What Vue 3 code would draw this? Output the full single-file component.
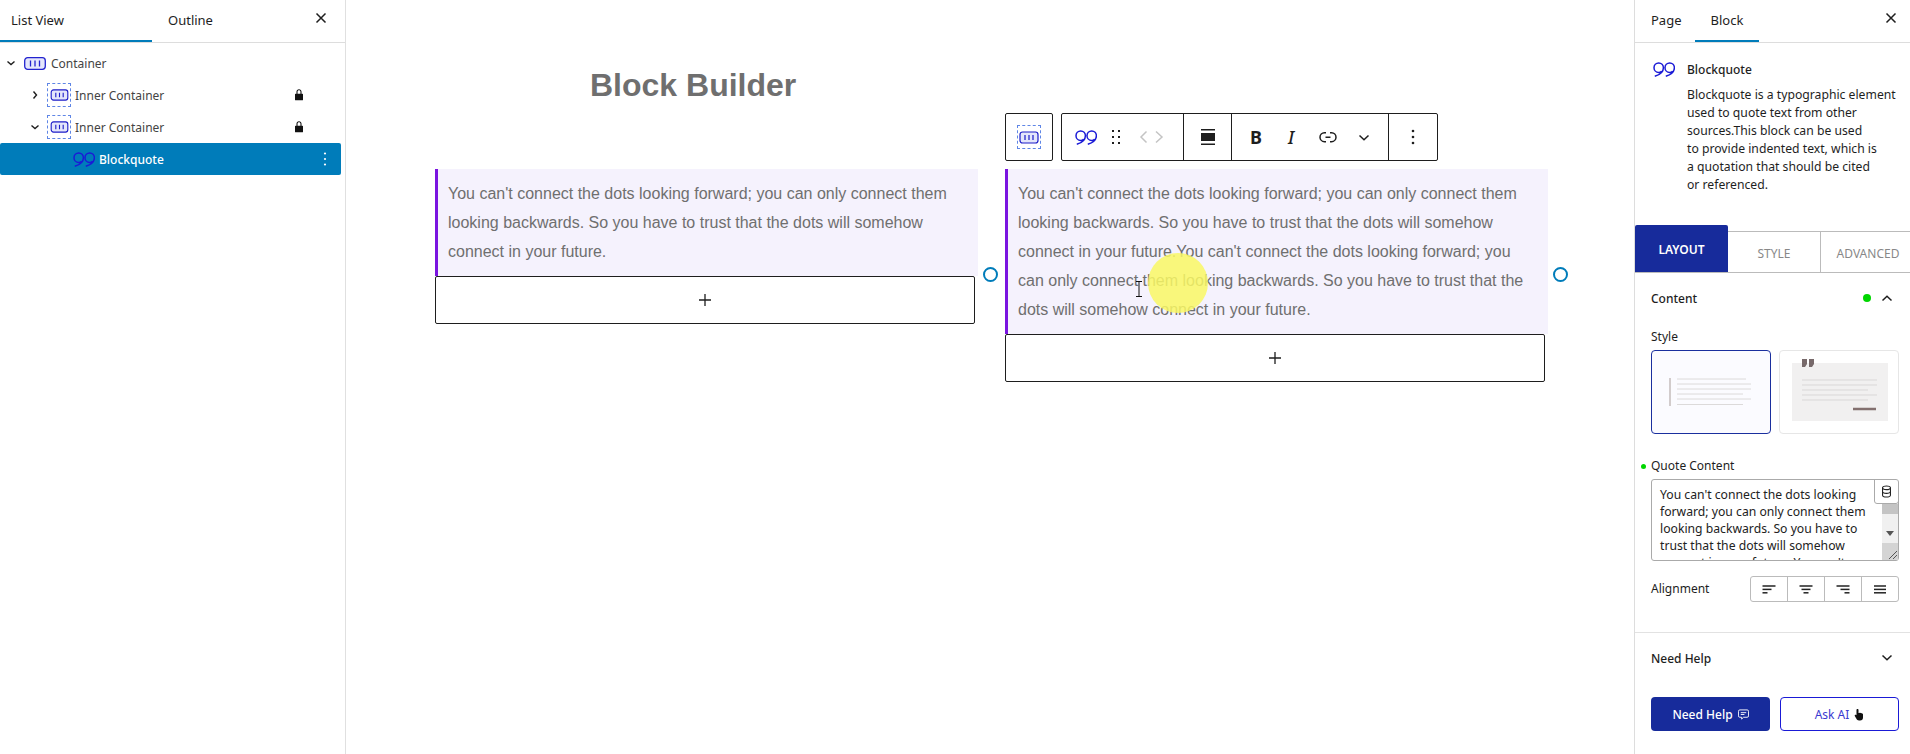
<script setup>
const rows = [
  { label: 'Container', cls: 'lvl0', chev: 'down', icon: 'outer' },
  { label: 'Inner Container', cls: 'lvl1', chev: 'right', icon: 'inner', lock: true },
  { label: 'Inner Container', cls: 'lvl1', chev: 'down', icon: 'inner', lock: true },
]
const quote = "You can't connect the dots looking forward; you can only connect them looking backwards. So you have to trust that the dots will somehow connect in your future."
const alignments = [
  ['M3.500 5h13', 'M3.500 8.400h9', 'M3.500 11.800h5'],
  ['M3.500 5h13', 'M5.500 8.400h9', 'M7.500 11.800h5'],
  ['M3.500 5h13', 'M7.500 8.400h9', 'M11.500 11.800h5'],
  ['M4 5h12', 'M4 8.400h12', 'M4 11.800h12'],
]
const quoteMark = 'M1.800 14.200C6.800 12.800 10.400 9.800 10.400 5.700A4.700 4.700 0 1 0 5.700 10.400C6.900 10.400 7.900 10 8.500 9.300M12.800 14.200C17.800 12.800 21.400 9.800 21.400 5.700A4.700 4.700 0 1 0 16.700 10.400C17.900 10.400 18.900 10 19.500 9.300'
</script>

<template>
  <div class="page">
    <aside class="left">
      <div class="tabs">
        <div class="tab active first">List View</div>
        <div class="tab second">Outline</div>
        <svg class="close" viewBox="0 0 12 12" width="12" height="12"><path d="M1.500 1.500l9 9M10.500 1.500l-9 9" stroke="#1e1e1e" stroke-width="1.500" fill="none" /></svg>
      </div>
      <div class="tree">
        <div v-for="(r, i) in rows" :key="i" class="row" :class="r.cls">
          <svg class="chev" viewBox="0 0 10 10" width="10" height="10">
            <path v-if="r.chev === 'down'" d="M1.500 3.500L5 6.500l3.500-3" fill="none" stroke="#1e1e1e" stroke-width="1.400" />
            <path v-else d="M3.500 1.500L6.500 5l-3 3.500" fill="none" stroke="#1e1e1e" stroke-width="1.400" />
          </svg>
          <span v-if="r.icon === 'inner'" class="dashed">
            <svg viewBox="0 0 20 13" width="19" height="12"><rect x="1" y="1" width="18" height="11" rx="2.500" fill="#e4e6fb" stroke="#1c1cc8" stroke-width="1.200" /><path d="M6 4v5M10 4v5M14 4v5" stroke="#1c1cc8" stroke-width="1.200" /></svg>
          </span>
          <svg v-else class="outer" viewBox="0 0 22 13" width="22" height="13"><rect x="0.700" y="0.700" width="20.600" height="11.600" rx="3" fill="#e4e6fb" stroke="#2323cf" stroke-width="1.300" /><path d="M6.500 3.500v6M11 3.500v6M15.500 3.500v6" stroke="#2323cf" stroke-width="1.300" /></svg>
          <span class="label">{{ r.label }}</span>
          <svg v-if="r.lock" class="lock" viewBox="0 0 24 24" width="16" height="16"><path d="M17 10h-1.200V7c0-2.100-1.700-3.800-3.800-3.800-2.100 0-3.800 1.700-3.800 3.800v3H7c-.6 0-1 .4-1 1v8c0 .6.4 1 1 1h10c.6 0 1-.4 1-1v-8c0-.6-.4-1-1-1zM9.800 7c0-1.200 1-2.200 2.200-2.200s2.200 1 2.200 2.200v3H9.800V7z" fill="#111" /></svg>
        </div>
        <div class="row selected">
          <svg class="q" viewBox="0 0 22 15" width="22" height="15"><path class="qb" :d="quoteMark" /></svg>
          <span class="label sel">Blockquote</span>
          <svg class="kebab" viewBox="0 0 4 16" width="4" height="16"><circle cx="2" cy="2.500" r="1.100" fill="#fff" /><circle cx="2" cy="8" r="1.100" fill="#fff" /><circle cx="2" cy="13.500" r="1.100" fill="#fff" /></svg>
        </div>
      </div>
    </aside>

    <main class="canvas">
      <h1 class="title">Block Builder</h1>
      <div class="cols">
        <section class="col">
          <blockquote class="bq">{{ quote }}</blockquote>
          <div class="adder"><svg viewBox="0 0 12 12" width="12" height="12"><path d="M6 0v12M0 6h12" stroke="#1e1e1e" stroke-width="1.300" /></svg></div>
        </section>
        <section class="col">
          <div class="toolbar">
            <div class="tb switcher">
              <span class="dashed big">
                <svg viewBox="0 0 20 13" width="20" height="13"><rect x="1" y="1" width="18" height="11" rx="2.500" fill="#e4e6fb" stroke="#1c1cc8" stroke-width="1.200" /><path d="M6 4v5M10 4v5M14 4v5" stroke="#1c1cc8" stroke-width="1.200" /></svg>
              </span>
            </div>
            <div class="tb main-tb">
              <div class="grp g1">
                <svg viewBox="0 0 22 15" width="22" height="15"><path class="qb" :d="quoteMark" /></svg>
                <svg class="drag" viewBox="0 0 24 24" width="24" height="24"><path d="M8 7h2V5H8v2zm0 6h2v-2H8v2zm0 6h2v-2H8v2zm6-14v2h2V5h-2zm0 8h2v-2h-2v2zm0 6h2v-2h-2v2z" fill="#1e1e1e" /></svg>
                <svg class="mover" viewBox="0 0 26 14" width="26" height="14"><path d="M7.500 1.500L2 7 7.500 12.500M17 1.500L23 7 17 12.500" fill="none" stroke="#c4c4c4" stroke-width="1.500" /></svg>
              </div>
              <div class="grp g2">
                <svg viewBox="0 0 24 24" width="24" height="24"><path d="M5 4h14v1.500H5V4zM5 8h14v8H5V8zM5 18.500h14V20H5v-1.500z" fill="#1e1e1e" /></svg>
              </div>
              <div class="grp g3">
                <span class="fmt b">B</span>
                <span class="fmt i">I</span>
                <svg class="link" viewBox="0 0 24 24" width="24" height="24"><path d="M10 17.389H8.444A5.194 5.194 0 1 1 8.444 7H10v1.500H8.444a3.694 3.694 0 0 0 0 7.389H10v1.500ZM14 7h1.556a5.194 5.194 0 0 1 0 10.390H14v-1.500h1.556a3.694 3.694 0 0 0 0-7.390H14V7Zm-4.500 6h5v-1.500h-5V13Z" fill="#1e1e1e" /></svg>
                <svg class="more" viewBox="0 0 12 8" width="12" height="8"><path d="M1.500 1.500L6 5.800l4.500-4.300" fill="none" stroke="#1e1e1e" stroke-width="1.500" /></svg>
              </div>
              <div class="grp g4">
                <svg viewBox="0 0 4 16" width="4" height="16"><circle cx="2" cy="2" r="1.300" fill="#1e1e1e" /><circle cx="2" cy="8" r="1.300" fill="#1e1e1e" /><circle cx="2" cy="14" r="1.300" fill="#1e1e1e" /></svg>
              </div>
            </div>
          </div>
          <blockquote class="bq">{{ quote }}{{ quote }}</blockquote>
          <div class="adder"><svg viewBox="0 0 12 12" width="12" height="12"><path d="M6 0v12M0 6h12" stroke="#1e1e1e" stroke-width="1.300" /></svg></div>
          <span class="handle hl"></span>
          <span class="handle hr"></span>
          <span class="spot"></span>
          <svg class="ibeam" viewBox="0 0 8 16" width="8" height="16"><path d="M1 .5h6M1 15.500h6M4 .5v15" stroke="#111" stroke-width="1" fill="none" /></svg>
        </section>
      </div>
    </main>

    <aside class="right">
      <div class="tabs rtabs">
        <div class="rtab">Page</div>
        <div class="rtab ractive">Block</div>
        <svg class="rclose" viewBox="0 0 12 12" width="12" height="12"><path d="M1.500 1.500l9 9M10.500 1.500l-9 9" stroke="#1e1e1e" stroke-width="1.500" fill="none" /></svg>
      </div>
      <div class="info">
        <svg class="info-q" viewBox="0 0 22 15" width="22" height="15"><path class="qb" :d="quoteMark" /></svg>
        <div>
          <div class="info-title">Blockquote</div>
          <p class="info-desc">Blockquote is a typographic element<br />used to quote text from other<br />sources.This block can be used<br />to provide indented text, which is<br />a quotation that should be cited<br />or referenced.</p>
        </div>
      </div>
      <div class="strip">
        <div class="st on">LAYOUT</div>
        <div class="st mid">STYLE</div>
        <div class="st last">ADVANCED</div>
      </div>
      <div class="sec">
        <div class="sec-head">
          <span>Content</span>
          <span class="dot"></span>
          <svg viewBox="0 0 12 8" width="12" height="8"><path d="M1.500 6.500L6 2.200l4.500 4.300" fill="none" stroke="#1e1e1e" stroke-width="1.500" /></svg>
        </div>
        <div class="lbl style-lbl">Style</div>
        <div class="cards">
          <div class="card picked">
            <svg viewBox="0 0 118 82" width="118" height="82">
              <path d="M18 27v28" stroke="#a99d9a" stroke-width="1" />
              <path d="M25 28h69M25 33h74M25 38h74M25 43h66M25 48h74M25 53.500h66" stroke="#dcdada" stroke-width="1" />
            </svg>
          </div>
          <div class="card">
            <svg viewBox="0 0 118 82" width="118" height="82">
              <rect x="12" y="12" width="96" height="58" fill="#f1f0f0" />
              <path d="M22 8h5v5l-2 3h-3zM29 8h5v5l-2 3h-3z" fill="#77696a" />
              <path d="M22 29h75M22 34h75M22 39h66M22 44h75M22 49h66" stroke="#d9d7d7" stroke-width="1" />
              <path d="M73 58h23" stroke="#83706f" stroke-width="2.500" />
            </svg>
          </div>
        </div>
        <div class="lbl quote-lbl"><span class="mini"></span>Quote Content</div>
        <div class="area">
          <div class="area-text">{{ quote }} You can't</div>
          <div class="db">
            <svg viewBox="0 0 12 14" width="11" height="13"><ellipse cx="6" cy="3" rx="4.300" ry="2" fill="none" stroke="#222" stroke-width="1.200" /><path d="M1.700 3v8c0 1.100 1.900 2 4.300 2s4.300-.9 4.300-2V3M1.700 7c0 1.100 1.900 2 4.300 2s4.300-.9 4.300-2" fill="none" stroke="#222" stroke-width="1.200" /></svg>
          </div>
          <div class="sb">
            <span class="thumb"></span>
            <span class="arrow"></span>
            <span class="grip">
              <svg viewBox="0 0 12 12" width="12" height="12"><path d="M11 3L3 11M11 7L7 11" stroke="#555" stroke-width="1" /></svg>
            </span>
          </div>
        </div>
        <div class="align-row">
          <span class="lbl">Alignment</span>
          <div class="aligns">
            <div v-for="(a, i) in alignments" :key="i" class="al">
              <svg viewBox="0 0 20 17" width="20" height="17"><path v-for="(d, j) in a" :key="j" :d="d" stroke="#222" stroke-width="1.500" /></svg>
            </div>
          </div>
        </div>
      </div>
      <div class="help">
        <div class="sec-head help-head">
          <span>Need Help</span>
          <svg viewBox="0 0 12 8" width="12" height="8"><path d="M1.500 1.500L6 5.800l4.500-4.300" fill="none" stroke="#1e1e1e" stroke-width="1.500" /></svg>
        </div>
        <div class="btns">
          <div class="btn solid">Need Help
            <svg viewBox="0 0 12 12" width="11" height="11"><path d="M2 1h8a1.500 1.500 0 0 1 1.500 1.500v5A1.500 1.500 0 0 1 10 9H6l-2 2V9H2A1.500 1.500 0 0 1 .5 7.500v-5A1.500 1.500 0 0 1 2 1z" fill="none" stroke="#fff" /><path d="M3 4h6M3 6h4" stroke="#fff" /></svg>
          </div>
          <div class="btn ghost">Ask AI
            <svg viewBox="0 0 10 13" width="10" height="13"><path d="M3.500 1c.6 0 1 .4 1 1v3h.8c.4-.4 1-.3 1.300.1.500-.2 1-.1 1.200.3.600-.1 1.200.3 1.200 1V9.500C9 11.500 8 12.500 6 12.500H5c-1.400 0-2-.7-2.600-1.700L.8 8c-.3-.5 0-1.100.5-1.200.4-.1.800 0 1.200.5V2c0-.6.4-1 1-1z" fill="#111" /></svg>
          </div>
        </div>
      </div>
    </aside>
  </div>
</template>

<style>
html, body { margin: 0; background: #fff; }
</style>

<style scoped>
.page { display: flex; width: 1910px; height: 754px; overflow: hidden; background: #fff; font-family: "Noto Sans", sans-serif; color: #1e1e1e; font-size: 12px; }
.left { width: 345px; flex: none; border-right: 1px solid #e0e0e0; }
.tabs { position: relative; display: flex; height: 42px; border-bottom: 1px solid #ddd; font-size: 13px; }
.tab { line-height: 40px; }
.first { width: 141px; padding-left: 11px; border-bottom: 2px solid #007cba; height: 40px; }
.second { padding-left: 16px; }
.close { position: absolute; left: 315px; top: 12px; }
.tree { padding-top: 4px; }
.row { display: flex; align-items: center; height: 32px; width: 341px; box-sizing: border-box; }
.lvl0 { padding-left: 6px; }
.lvl1 { padding-left: 30px; }
.chev { flex: none; }
.outer { margin-left: 8px; margin-right: 5px; }
.lvl1 .chev { margin-right: 7px; }
.dashed { display: flex; align-items: center; justify-content: center; width: 22px; height: 22px; border: 1px dashed #5f86e6; margin-right: 4px; flex: none; }
.dashed.big { width: 22px; height: 22px; margin: 0; }
.label { font-size: 12px; color: #444; white-space: nowrap; }
.lock { margin-left: auto; margin-right: 34px; }
.selected { background: #007cba; border-radius: 2px; padding-left: 73px; }
.q { margin-right: 4px; }
.qb { fill: none; stroke: #1a1ad6; stroke-width: 1.500; }
.sel { color: #fff; font-weight: 500; }
.kebab { margin-left: auto; margin-right: 14px; }

.canvas { flex: 1; min-width: 0; padding-left: 89px; box-sizing: border-box; }
.title { margin: 67px 0 0 155px; font: bold 32px/37px "Liberation Sans", Arial, sans-serif; color: #6f6f6f; }
.cols { display: flex; gap: 27px; margin-top: 65px; }
.col { position: relative; width: 543px; flex: none; }
.bq { margin: 0; box-sizing: border-box; background: #f5f2fd; border-left: 3px solid #7a14e0; padding: 10px; font: 16px/29.100px "Liberation Sans", Arial, sans-serif; color: #6f6f6f; width: 543px; }
.adder { display: flex; align-items: center; justify-content: center; box-sizing: border-box; width: 540px; height: 48px; border: 1px solid #1e1e1e; border-radius: 2px; background: #fff; }

.toolbar { position: absolute; left: 0; top: -56px; display: flex; gap: 8px; }
.tb { box-sizing: border-box; height: 48px; border: 1px solid #1e1e1e; border-radius: 2px; display: flex; align-items: center; background: #fff; }
.switcher { width: 48px; justify-content: center; }
.main-tb { width: 377px; }
.grp { display: flex; align-items: center; height: 100%; box-sizing: border-box; }
.g1 { width: 122px; padding-left: 13px; border-right: 1px solid #1e1e1e; }
.drag { margin-left: 7px; }
.mover { margin-left: 11px; }
.g2 { width: 48px; justify-content: center; border-right: 1px solid #1e1e1e; }
.g3 { width: 157px; border-right: 1px solid #1e1e1e; padding-left: 14px; }
.fmt { width: 20px; text-align: center; font-size: 18px; line-height: 22px; color: #1e1e1e; margin-bottom: 1px; }
.b { font-weight: 700; }
.i { font-style: italic; font-weight: 500; margin-left: 15px; }
.link { margin-left: 15px; }
.more { margin-left: 18px; margin-top: 1px; }
.g4 { flex: 1; justify-content: center; }

.handle { position: absolute; top: 98px; width: 15px; height: 15px; box-sizing: border-box; border: 2px solid #007cba; border-radius: 50%; background: #fff; }
.hl { left: -22px; }
.hr { left: 548px; }
.spot { position: absolute; left: 143px; top: 84px; width: 60px; height: 60px; border-radius: 50%; background: rgba(249, 248, 100, 0.85); }
.ibeam { position: absolute; left: 130px; top: 112px; }

.right { width: 276px; flex: none; border-left: 1px solid #ddd; box-sizing: border-box; }
.rtabs { padding-left: 16px; font-size: 13px; }
.rtab { line-height: 40px; }
.rtab:first-child { width: 44px; }
.ractive { width: 64px; box-sizing: border-box; text-align: center; height: 42px; border-bottom: 2px solid #007cba; }
.rclose { position: absolute; left: 250px; top: 12px; }
.info { display: flex; height: 182px; box-sizing: border-box; padding: 18px 0 0 18px; }
.info-q { margin-top: 1px; margin-right: 12px; flex: none; }
.info-title { font-size: 12px; line-height: 18px; font-weight: 500; }
.info-desc { margin: 7px 0 0; font-size: 12.200px; line-height: 18px; white-space: nowrap; }
.strip { display: flex; align-items: flex-end; height: 48px; box-sizing: border-box; border-bottom: 1px solid #bbb; text-align: center; font-size: 12px; }
.st { box-sizing: border-box; }
.on { width: 93px; height: 47px; line-height: 50px; background: #172b9b; color: #fff; font-weight: 600; border-radius: 2px 2px 0 0; }
.mid { width: 93px; height: 41px; line-height: 43px; border-top: 1px solid #bbb; border-right: 1px solid #bbb; color: #888; }
.last { flex: 1; height: 41px; line-height: 43px; padding-left: 5px; border-top: 1px solid #bbb; color: #888; white-space: nowrap; }
.sec { padding: 16px 11px 30px 16px; border-bottom: 1px solid #e2e2e2; }
.sec-head { display: flex; align-items: center; height: 18px; font-size: 12px; font-weight: 500; }
.sec-head span:first-child { flex: 1; }
.dot { width: 8px; height: 8px; border-radius: 50%; background: #00d600; margin-right: 10px; }
.sec-head svg { margin-right: 6px; }
.lbl { font-size: 12px; line-height: 18px; }
.style-lbl { margin-top: 21px; }
.cards { display: flex; justify-content: space-between; margin-top: 4px; }
.card { box-sizing: border-box; width: 120px; height: 84px; border: 1px solid #e6e6e6; border-radius: 4px; display: flex; }
.picked { border-color: #1a2f9e; background: #fbfbff; }
.quote-lbl { position: relative; margin-top: 23px; }
.mini { position: absolute; left: -10px; top: 7px; width: 5px; height: 5px; border-radius: 50%; background: #00d600; }
.area { position: relative; margin-top: 4px; height: 82px; box-sizing: border-box; border: 1px solid #aaa; border-radius: 3px; overflow: hidden; }
.area-text { width: 214px; padding: 6px 0 0 8px; font-size: 12.200px; line-height: 17px; color: #222; }
.db { position: absolute; right: -1px; top: -1px; width: 25px; height: 25px; box-sizing: border-box; border: 1px solid #aaa; border-radius: 0 3px 3px 3px; background: #fff; display: flex; align-items: center; justify-content: center; }
.sb { position: absolute; right: 0; top: 24px; bottom: 0; width: 16px; background: #f0f0f0; }
.thumb { display: block; height: 10px; background: #c4c4c4; }
.arrow { position: absolute; left: 4px; top: 27px; border: 4px solid transparent; border-top: 5px solid #555; border-bottom: 0; }
.grip { position: absolute; left: 0; right: 0; bottom: 0; height: 17px; background: #d4d4d4; display: flex; align-items: flex-end; justify-content: flex-end; }
.align-row { display: flex; align-items: center; justify-content: space-between; margin-top: 15px; }
.aligns { display: flex; width: 149px; height: 26px; box-sizing: border-box; border: 1px solid #bbb; border-radius: 3px; }
.al { flex: 1; display: flex; align-items: center; justify-content: center; border-right: 1px solid #bbb; }
.al:last-child { border-right: 0; }
.help { padding: 16px 11px 0 16px; }
.btns { display: flex; justify-content: space-between; margin-top: 30px; }
.btn { box-sizing: border-box; width: 119px; height: 34px; border-radius: 4px; display: flex; align-items: center; justify-content: center; gap: 5px; font-size: 12px; font-weight: 500; }
.solid { background: #172b9b; color: #fff; }
.ghost { border: 1px solid #1a1ad6; color: #3a3ad0; font-weight: 400; }
</style>
